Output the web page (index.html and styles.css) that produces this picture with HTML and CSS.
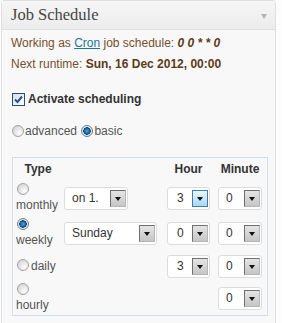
FILE: index.html
```html
<!DOCTYPE html>
<html>
<head>
<meta charset="utf-8">
<link rel="stylesheet" href="styles.css">
</head>
<body>
<div class="panel">
  <div class="hd">
    <h3 class="title">Job Schedule</h3>
    <span class="toggle"></span>
  </div>
  <div class="bd">
    <p class="info">Working as <a class="link" href="#">Cron</a> job schedule: <b><i>0 0 * * 0</i></b></p>
    <p class="info">Next runtime: <b>Sun, 16 Dec 2012, 00:00</b></p>
    <div class="chkrow"><span class="cb"><svg width="9" height="9" viewBox="0 0 9 9"><path d="M1 4.5 L3.5 7 L8 1.5" fill="none" stroke="#2a4d9c" stroke-width="2"/></svg></span><span class="chklabel">Activate scheduling</span></div>
    <div class="modes"><span class="radio"></span>advanced <span class="radio on"></span>basic</div>
    <div class="fs">
      <div class="grid">
        <div class="th th-type">Type</div>
        <div></div>
        <div class="th th-hour">Hour</div>
        <div class="th th-min">Minute</div>

        <div class="type"><span class="radio"></span><wbr>monthly</div>
        <div><span class="sel w-on"><span class="val">on 1.</span><span class="btn"></span></span></div>
        <div><span class="sel w-hour"><span class="val">3</span><span class="btn hover"></span></span></div>
        <div><span class="sel w-min"><span class="val">0</span><span class="btn"></span></span></div>

        <div class="type"><span class="radio on"></span><wbr>weekly</div>
        <div><span class="sel w-day"><span class="val">Sunday</span><span class="btn"></span></span></div>
        <div><span class="sel w-hour"><span class="val">0</span><span class="btn"></span></span></div>
        <div><span class="sel w-min"><span class="val">0</span><span class="btn"></span></span></div>

        <div class="type"><span class="radio"></span><wbr>daily</div>
        <div></div>
        <div><span class="sel w-hour"><span class="val">3</span><span class="btn"></span></span></div>
        <div><span class="sel w-min"><span class="val">0</span><span class="btn"></span></span></div>

        <div class="type"><span class="radio"></span><wbr>hourly</div>
        <div></div>
        <div></div>
        <div><span class="sel w-min"><span class="val">0</span><span class="btn"></span></span></div>
      </div>
    </div>
  </div>
</div>
</body>
</html>
```
FILE: styles.css
```css
html, body {
  margin: 0;
  padding: 0;
  background: #fdfdfd;
}
body {
  font-family: "Liberation Sans", Arial, sans-serif;
  font-size: 12px;
  color: #333;
}
.panel {
  margin-left: 1px;
  width: 275px;
  box-sizing: border-box;
  height: 330px;
  border: 1px solid #dfdfdf;
  border-radius: 3px 3px 0 0;
  background: #f8f8f8;
}
.hd {
  height: 28px;
  border-bottom: 1px solid #dfdfdf;
  background: linear-gradient(to bottom, #f6f6f6, #ececec);
  display: flex;
  align-items: center;
  justify-content: space-between;
  padding: 0 8px 0 9px;
}
.title {
  margin: 0;
  font-family: "Liberation Serif", "Times New Roman", serif;
  font-weight: normal;
  font-size: 16.5px;
  color: #464646;
  line-height: 28px;
}
.toggle {
  width: 0;
  height: 0;
  border-left: 3px solid transparent;
  border-right: 3px solid transparent;
  border-top: 5px solid #b4b4b4;
  margin-top: 2px;
}
.bd {
  padding: 3px 9px 0 9px;
}
.info {
  margin: 0;
  line-height: 21px;
  color: #76502e;
}
.info b {
  color: #5d3a19;
}
.link {
  color: #21759b;
  text-decoration: underline;
}
.chkrow {
  margin-top: 16px;
  height: 16px;
  display: flex;
  align-items: center;
}
.cb {
  width: 11px;
  height: 11px;
  border: 1px solid #1d4f7f;
  background: linear-gradient(135deg, #dcdcd6, #ffffff);
  display: inline-flex;
  align-items: center;
  justify-content: center;
  margin-left: 1px;
  margin-right: 3px;
}
.chklabel {
  font-weight: bold;
  color: #333;
}
.modes {
  margin-top: 16px;
  height: 16px;
  line-height: 16px;
  color: #555;
}
.radio {
  display: inline-block;
  width: 10px;
  height: 10px;
  border-radius: 50%;
  border: 1px solid #a3a3a3;
  background: radial-gradient(circle at 65% 70%, #ffffff 0, #e6e6e6 45%, #cfcfcf 100%);
  vertical-align: -2px;
  margin: 0 1px 0 1px;
}
.radio.on {
  border-color: #6e7f90;
  background: radial-gradient(circle at 50% 50%, #4aa6dc 0, #1b6aa5 2.5px, #0e3f6c 3.5px, #e8eef3 4px, #cdd6de 100%);
}
.fs {
  margin-top: 18px;
  margin-left: 1px;
  width: 256px;
  box-sizing: border-box;
  border: 1px solid #cfe0ec;
  padding: 0 0 1px 3px;
}
.grid {
  display: grid;
  grid-template-columns: 48px 103px 51px 44px;
  grid-template-rows: 22px 36px 34px 32px 32px;
  align-items: center;
}
.th {
  font-weight: bold;
  color: #333;
  text-align: center;
}
.th-type { padding-right: 4px; }
.th-hour { padding-right: 8px; }
.type {
  width: 44px;
  line-height: 15px;
  color: #555;
}
.type .radio {
  margin: 0 2px 0 1px;
  vertical-align: -1px;
}
.sel {
  display: flex;
  align-items: center;
  justify-content: space-between;
  box-sizing: border-box;
  height: 23px;
  border: 1px solid #dcdcdc;
  border-radius: 3px;
  background: #fff;
  padding: 0 1px 0 7px;
  color: #333;
}
.w-on { width: 64px; }
.w-day { width: 93px; }
.w-hour { width: 43px; padding-left: 9px; }
.w-min { width: 44px; }
.btn {
  position: relative;
  width: 16px;
  height: 17px;
  box-sizing: border-box;
  border: 1px solid #8a8a8a;
  border-color: #6f6f6f #b5b5b5 #b5b5b5 #6f6f6f;
  background: linear-gradient(to bottom, #e4e4e4, #c6c6c6);
}
.btn::after {
  content: "";
  position: absolute;
  left: 4px;
  top: 6px;
  border-left: 3px solid transparent;
  border-right: 3px solid transparent;
  border-top: 4px solid #111;
}
.btn.hover {
  border-color: #3c7fb1;
  background: linear-gradient(to bottom, #eaf6fd, #a7d9f5);
}
```
